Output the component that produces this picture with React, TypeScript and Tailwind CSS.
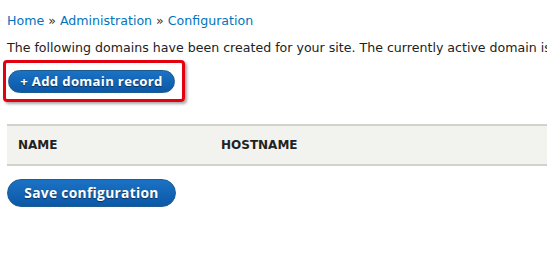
import React from "react";

export default function App() {
  const font = { fontFamily: '"DejaVu Sans", "Lucida Grande", Arial, sans-serif' };
  const btnFont = { fontFamily: '"Open Sans", "Lucida Grande", Arial, sans-serif' };
  return (
    <div className="w-[547px] h-[269px] bg-white overflow-hidden text-[#222]" style={font}>
      <div className="pl-[7px] pt-[12px]">
        <div className="text-[12.6px] leading-[18px] text-[#0074bd] whitespace-nowrap">
          <span>Home</span>
          <span className="text-[#333]"> » </span>
          <span>Administration</span>
          <span className="text-[#333]"> » </span>
          <span>Configuration</span>
        </div>
        <p className="mt-[9px] text-[12.6px] leading-[18px] whitespace-nowrap text-[#222]">
          The following domains have been created for your site. The currently active domain is <b>example.com</b>
        </p>
        <div className="mt-[3px] ml-[-4px] w-[182px] h-[42px] border-[3px] border-[#e3000f] rounded-[4px] shadow-[2px_2px_3px_rgba(0,0,0,0.35)] pl-[2px] pt-[6px]">
          <button
            style={btnFont}
            className="w-[167px] h-[23px] rounded-full border border-[#1e5c90] bg-gradient-to-b from-[#1b72c4] to-[#0c58a8] text-white font-bold text-[13.2px] leading-[21px] tracking-[0.3px] [text-shadow:0_1px_1px_rgba(0,0,0,0.5)]"
          >
            + Add domain record
          </button>
        </div>
        <div className="mt-[22px] h-[42px] bg-[#f2f2ee] border-t-2 border-b-2 border-[#d2d2cd] flex items-center">
          <div className="w-[214px] pl-[11px] text-[12px] font-bold text-[#222] uppercase">Name</div>
          <div className="text-[12px] font-bold text-[#222] uppercase">Hostname</div>
        </div>
        <button
          style={btnFont}
          className="mt-[13px] w-[169px] h-[28px] rounded-full border border-[#1e5c90] bg-gradient-to-b from-[#1b72c4] to-[#0c58a8] text-white font-bold text-[13.8px] leading-[26px] tracking-[0.3px] [text-shadow:0_1px_1px_rgba(0,0,0,0.5)]"
        >
          Save configuration
        </button>
      </div>
    </div>
  );
}
